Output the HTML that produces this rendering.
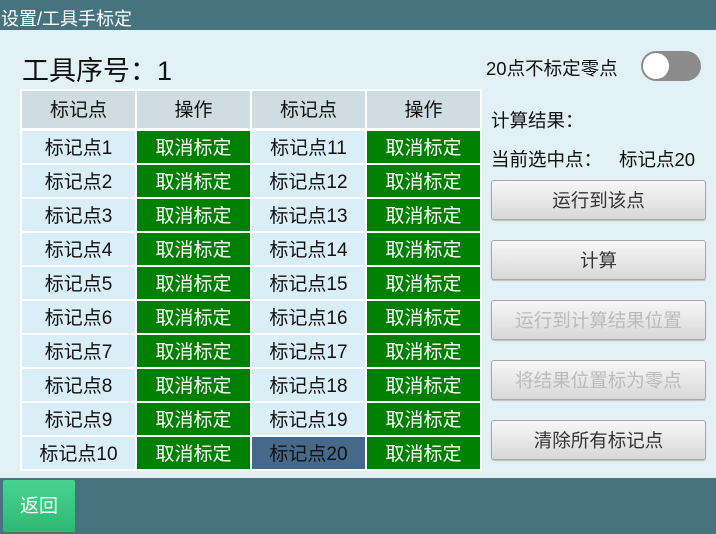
<!DOCTYPE html>
<html><head><meta charset="utf-8"><style>
*{margin:0;padding:0;box-sizing:border-box}
body{width:716px;height:534px;background:#e2f1f6;font-family:"Liberation Sans","Noto Sans CJK SC",sans-serif;position:relative;overflow:hidden}
.a{position:absolute}
.hdr{left:0;top:0;width:716px;height:30px;background:#47737f;color:#fff;font-size:18px;line-height:40px;padding-left:1px}
.hdr span{position:relative;top:-1px}
.c{position:absolute;width:113px;height:32px;line-height:35px;text-align:center;font-size:19px;color:#111}
.h{background:#cfdce1;height:37px;line-height:40px}
.n{background:#d9eef6}
.g{background:#008000;color:#fff}
.s{background:#46698a;color:#111}
.btn{position:absolute;left:491px;width:215px;height:40px;border:1px solid #a8a8a8;border-radius:3px;background:linear-gradient(#f7f7f7,#d8d8d8);text-align:center;line-height:40px;font-size:18.5px;color:#333;box-shadow:0 1px 1px #bbb}
.dis{color:#bbb}
.t{font-size:18.5px;color:#111}
</style></head><body>
<div class="a hdr"><span>设置/工具手标定</span></div>
<div class="a" style="left:22px;top:54px;font-size:27px;color:#111;line-height:34px">工具序号：1</div>
<div class="a t" style="left:486px;top:57px;line-height:24px">20点不标定零点</div>
<div class="a" style="left:641px;top:51px;width:60px;height:30px;border-radius:15px;background:#8c8c8c"></div>
<div class="a" style="left:643px;top:53px;width:26px;height:26px;border-radius:13px;background:#fff"></div>
<div class="a t" style="left:491px;top:107px">计算结果：</div>
<div class="a t" style="left:491px;top:146px">当前选中点：</div>
<div class="a t" style="left:619px;top:146px">标记点20</div>
<div class="a" style="left:20px;top:89px;width:462px;height:382px;background:#fff"></div>
<div class="c h" style="left:22px;top:91px">标记点</div>
<div class="c h" style="left:137px;top:91px">操作</div>
<div class="c h" style="left:252px;top:91px">标记点</div>
<div class="c h" style="left:367px;top:91px">操作</div>
<div id="rows"></div>
<script>
var r='';for(var i=0;i<10;i++){var y=131+34*i;
r+='<div class="c n" style="left:22px;top:'+y+'px">标记点'+(i+1)+'</div>';
r+='<div class="c g" style="left:137px;top:'+y+'px">取消标定</div>';
r+='<div class="c '+(i==9?'s':'n')+'" style="left:252px;top:'+y+'px">标记点'+(i+11)+'</div>';
r+='<div class="c g" style="left:367px;top:'+y+'px">取消标定</div>';}
document.getElementById('rows').innerHTML=r;
</script>
<div class="btn" style="top:180px">运行到该点</div>
<div class="btn" style="top:240px">计算</div>
<div class="btn dis" style="top:300px">运行到计算结果位置</div>
<div class="btn dis" style="top:360px">将结果位置标为零点</div>
<div class="btn" style="top:420px">清除所有标记点</div>
<div class="a" style="left:0;top:478px;width:716px;height:56px;background:#47737f"></div>
<div class="a" style="left:3px;top:480px;width:72px;height:52px;background:linear-gradient(#48d48e,#2fb873);border-radius:2px;color:#fff;font-size:19px;text-align:center;line-height:54px">返回</div>
</body></html>
